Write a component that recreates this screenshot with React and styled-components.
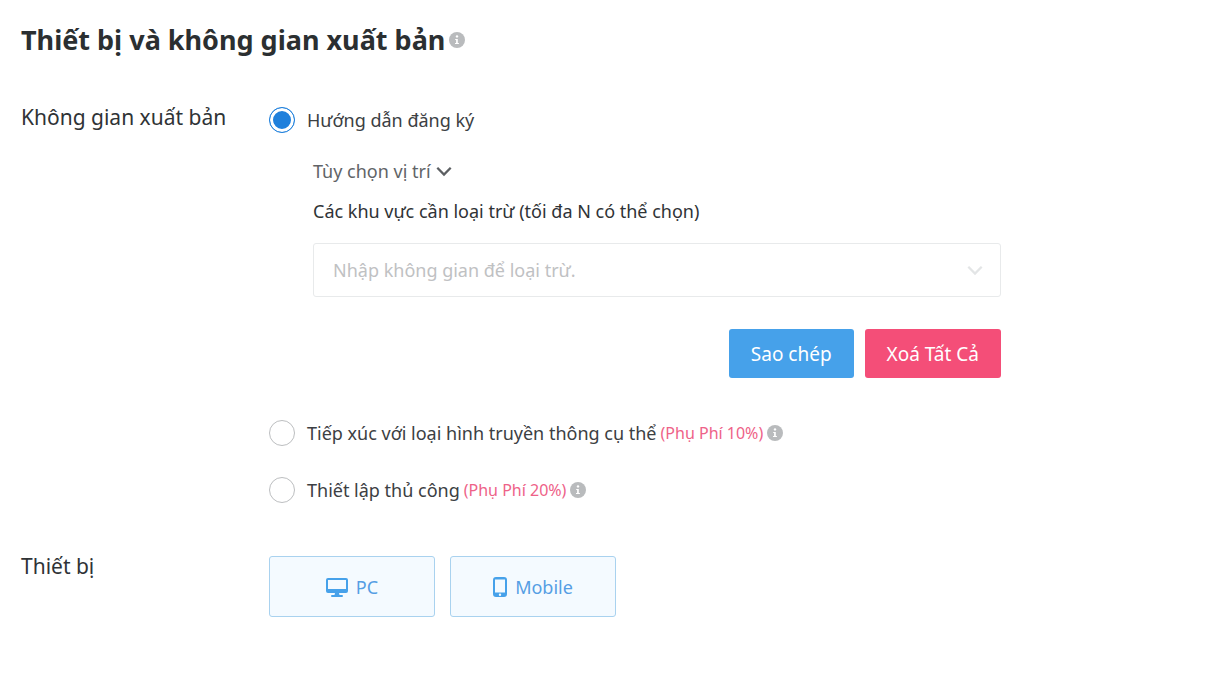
import React, { useState } from "react";
import styled, { createGlobalStyle, css } from "styled-components";

const GlobalStyle = createGlobalStyle`
  *, *::before, *::after { box-sizing: border-box; }
  body {
    margin: 0;
    background: #fff;
    color: #2f3336;
    font-family: "Noto Sans", "Open Sans", sans-serif;
  }
  button, input { font: inherit; }
`;

const Page = styled.main`
  padding: 20px 21px;
`;

const Title = styled.h1`
  display: flex;
  align-items: center;
  gap: 4px;
  margin: 0 0 39px;
  font-size: 27px;
  line-height: 40px;
  font-weight: 700;
  color: #2b2f31;
`;

const Section = styled.section`
  display: grid;
  grid-template-columns: 248px minmax(0, 732px);
  align-items: start;

  & + & { margin-top: 42px; }
`;

const SectionLabel = styled.h2`
  margin: 0;
  font-size: 21px;
  line-height: 36px;
  font-weight: 400;
`;

const Options = styled.div`
  display: flex;
  flex-direction: column;
  gap: 25px;
  padding-top: 5px;
`;

const Option = styled.label`
  display: flex;
  align-items: center;
  gap: 12px;
  font-size: 18px;
  line-height: 32px;
  color: #3c4043;
  cursor: pointer;
`;

const OptionText = styled.span`
  display: flex;
  align-items: center;
  gap: 4px;
`;

const Fee = styled.span`
  font-size: 16px;
  color: #ee6288;
`;

const Radio = styled.input`
  appearance: none;
  flex: none;
  width: 26px;
  height: 26px;
  margin: 0;
  border: 1px solid #bcbec0;
  border-radius: 50%;
  background: #fff;

  &:checked {
    border-color: #1f80dc;
    background: #1f80dc;
    box-shadow: inset 0 0 0 3px #fff;
  }
`;

const Placement = styled.div`
  display: flex;
  flex-direction: column;
  margin: -6px 0 14px;
  padding-left: 44px;
`;

const ToggleButton = styled.button`
  display: flex;
  align-items: center;
  align-self: flex-start;
  gap: 4px;
  padding: 0;
  border: 0;
  background: none;
  font-size: 18px;
  line-height: 32px;
  color: #616467;
  cursor: pointer;
`;

const FieldLabel = styled.label`
  margin: 8px 0 16px;
  font-size: 18px;
  line-height: 32px;
`;

const Field = styled.div`
  display: flex;
  align-items: center;
  height: 54px;
  padding: 0 16px 0 19px;
  border: 1px solid #e8eaeb;
  border-radius: 3px;
`;

const FieldInput = styled.input`
  flex: 1;
  min-width: 0;
  padding: 0;
  border: 0;
  outline: 0;
  background: none;
  font-size: 18px;
  line-height: 32px;
  color: inherit;

  &::placeholder { color: #bfc1c3; opacity: 1; }
`;

const Actions = styled.div`
  display: flex;
  justify-content: flex-end;
  gap: 11px;
  margin-top: 32px;
`;

const ActionButton = styled.button`
  height: 49px;
  padding: 0 22px;
  border: 0;
  border-radius: 3px;
  background: ${({ $tone }) => ($tone === "danger" ? "#f44e78" : "#46a1ea")};
  font-size: 19px;
  line-height: 32px;
  color: #fff;
  cursor: pointer;
`;

const Devices = styled.div`
  display: flex;
  flex-wrap: wrap;
  gap: 15px;
  padding-top: 8px;
`;

const DeviceButton = styled.button`
  display: flex;
  align-items: center;
  justify-content: center;
  gap: 8px;
  width: 166px;
  height: 61px;
  border: 1px solid #d5d8da;
  border-radius: 3px;
  background: #fff;
  font-size: 18px;
  line-height: 32px;
  color: #7b7f82;
  cursor: pointer;

  ${({ $active }) => $active && css`
    border-color: #a9d2ef;
    background: #f4faff;
    color: #559ee4;
  `}
`;

const Icon = styled.svg`
  display: block;
  flex: none;
`;

function InfoIcon() {
  return (
    <Icon width="16" height="16" viewBox="0 0 16 16" role="img" aria-label="Info">
      <circle cx="8" cy="8" r="8" fill="#b9bbbd" />
      <circle cx="8" cy="4.4" r="1.2" fill="#fff" />
      <path d="M6.2 6.9H8.8V11h1.100v1.100H6V11h1.100V8h-.9z" fill="#fff" />
    </Icon>
  );
}

function Chevron({ color }) {
  return (
    <Icon width="18" height="18" viewBox="0 0 18 18" fill="none" aria-hidden="true">
      <path d="M2.300 5.800L9 12.500l6.700-6.700" stroke={color} strokeWidth="2.300" />
    </Icon>
  );
}

function DesktopIcon() {
  return (
    <Icon width="22" height="20" viewBox="0 0 22 20" aria-hidden="true">
      <path
        fill="#46a1ea"
        fillRule="evenodd"
        d="M2 1h18a2 2 0 0 1 2 2v11a2 2 0 0 1-2 2h-7l.5 2H16a1 1 0 0 1 0 2H6a1 1 0 0 1 0-2h2.500l.5-2H2a2 2 0 0 1-2-2V3a2 2 0 0 1 2-2zM2 3v9h18V3z"
      />
    </Icon>
  );
}

function MobileIcon() {
  return (
    <Icon width="14" height="20" viewBox="0 0 14 20" aria-hidden="true">
      <path
        fill="#46a1ea"
        fillRule="evenodd"
        d="M3 0h8a3 3 0 0 1 3 3v14a3 3 0 0 1-3 3H3a3 3 0 0 1-3-3V3a3 3 0 0 1 3-3zM2 2.500v13h10v-13zM7 16.600a1.200 1.200 0 1 0 0 2.400 1.200 1.200 0 0 0 0-2.400z"
      />
    </Icon>
  );
}

function SpaceOption({ value, selected, onSelect, label, fee }) {
  return (
    <Option>
      <Radio
        type="radio"
        name="space"
        value={value}
        checked={selected === value}
        onChange={() => onSelect(value)}
      />
      <OptionText>
        {label}
        {fee && <Fee>{fee}</Fee>}
        {fee && <InfoIcon />}
      </OptionText>
    </Option>
  );
}

export default function App() {
  const [space, setSpace] = useState("guide");
  const [open, setOpen] = useState(true);
  const [devices, setDevices] = useState({ pc: true, mobile: true });
  const toggle = (key) => setDevices((d) => ({ ...d, [key]: !d[key] }));

  return (
    <Page>
      <GlobalStyle />
      <Title>
        Thiết bị và không gian xuất bản
        <InfoIcon />
      </Title>

      <Section>
        <SectionLabel>Không gian xuất bản</SectionLabel>
        <Options>
          <SpaceOption value="guide" selected={space} onSelect={setSpace} label="Hướng dẫn đăng ký" />
          <Placement>
            <ToggleButton type="button" aria-expanded={open} onClick={() => setOpen(!open)}>
              Tùy chọn vị trí
              <Chevron color="#5c5f62" />
            </ToggleButton>
            {open && (
              <>
                <FieldLabel htmlFor="excluded">Các khu vực cần loại trừ (tối đa N có thể chọn)</FieldLabel>
                <Field>
                  <FieldInput id="excluded" type="text" placeholder="Nhập không gian để loại trừ." />
                  <Chevron color="#e3e5e6" />
                </Field>
                <Actions>
                  <ActionButton type="button">Sao chép</ActionButton>
                  <ActionButton type="button" $tone="danger">Xoá Tất Cả</ActionButton>
                </Actions>
              </>
            )}
          </Placement>
          <SpaceOption
            value="media"
            selected={space}
            onSelect={setSpace}
            label="Tiếp xúc với loại hình truyền thông cụ thể"
            fee="(Phụ Phí 10%)"
          />
          <SpaceOption
            value="manual"
            selected={space}
            onSelect={setSpace}
            label="Thiết lập thủ công"
            fee="(Phụ Phí 20%)"
          />
        </Options>
      </Section>

      <Section>
        <SectionLabel>Thiết bị</SectionLabel>
        <Devices>
          <DeviceButton type="button" aria-pressed={devices.pc} $active={devices.pc} onClick={() => toggle("pc")}>
            <DesktopIcon />
            PC
          </DeviceButton>
          <DeviceButton type="button" aria-pressed={devices.mobile} $active={devices.mobile} onClick={() => toggle("mobile")}>
            <MobileIcon />
            Mobile
          </DeviceButton>
        </Devices>
      </Section>
    </Page>
  );
}
